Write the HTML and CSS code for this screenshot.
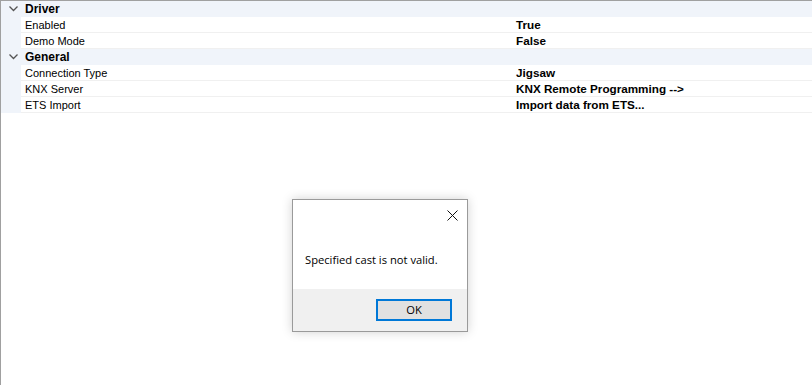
FILE: index.html
```html
<!DOCTYPE html>
<html lang="en">
<head>
    <meta charset="UTF-8">
    <title>Property Grid</title>
    <link rel="stylesheet" href="styles.css">
</head>
<body>

<div class="grid">
    <div class="category">
        <span class="chevron"><svg width="9" height="6" viewBox="0 0 9 6"><path d="M0.5 0.5 L4.5 4.5 L8.5 0.5" fill="none" stroke="#555" stroke-width="1.3"/></svg></span>
        <span class="cat-name">Driver</span>
    </div>
    <div class="row"><span class="margin"></span><span class="name">Enabled</span><span class="value">True</span></div>
    <div class="row"><span class="margin"></span><span class="name">Demo Mode</span><span class="value">False</span></div>
    <div class="category">
        <span class="chevron"><svg width="9" height="6" viewBox="0 0 9 6"><path d="M0.5 0.5 L4.5 4.5 L8.5 0.5" fill="none" stroke="#555" stroke-width="1.3"/></svg></span>
        <span class="cat-name">General</span>
    </div>
    <div class="row"><span class="margin"></span><span class="name">Connection Type</span><span class="value">Jigsaw</span></div>
    <div class="row"><span class="margin"></span><span class="name">KNX Server</span><span class="value">KNX Remote Programming --&gt;</span></div>
    <div class="row"><span class="margin"></span><span class="name">ETS Import</span><span class="value">Import data from ETS...</span></div>
</div>

<div class="dialog">
    <div class="dialog-body">
        <div class="title-bar">
            <span class="close"><svg width="11" height="11" viewBox="0 0 11 11"><path d="M0.5 0.5 L10.5 10.5 M10.5 0.5 L0.5 10.5" stroke="#111" stroke-width="1"/></svg></span>
        </div>
        <p class="message">Specified cast is not valid.</p>
    </div>
    <div class="dialog-footer">
        <button class="ok">OK</button>
    </div>
</div>

</body>
</html>
```

FILE: styles.css
```css
body {
    margin: 0;
    padding: 0;
    width: 812px;
    height: 385px;
    background-color: #fff;
    font-family: 'Liberation Sans', Arial, sans-serif;
    font-size: 11px;
    color: #000;
    overflow: hidden;
    position: relative;
    box-sizing: border-box;
    border-top: 1px solid #a0a0a0;
    border-left: 1px solid #a0a0a0;
}

.grid {
    display: flex;
    flex-direction: column;
}

.category {
    display: flex;
    align-items: center;
    height: 16px;
    background-color: #f0f4fa;
}

.chevron {
    width: 24px;
    display: flex;
    justify-content: center;
}

.cat-name {
    font-weight: bold;
    font-size: 12px;
}

.row {
    display: flex;
    align-items: center;
    height: 16px;
    box-sizing: border-box;
    border-bottom: 1px solid #f0f0f0;
}

.row .margin {
    width: 20px;
    height: 16px;
    background-color: #f0f4fa;
    flex-shrink: 0;
}

.row .name {
    width: 491px;
    padding-left: 4px;
}

.row .value {
    font-weight: bold;
    font-size: 11.7px;
}

.dialog {
    position: absolute;
    left: 291px;
    top: 198px;
    width: 174px;
    height: 131px;
    border: 1px solid #9a9a9a;
    background: #fff;
    box-shadow: 0 0 10px rgba(0, 0, 0, 0.18);
    display: flex;
    flex-direction: column;
    font-family: 'Open Sans', 'Noto Sans', sans-serif;
    font-size: 11.2px;
}

.dialog-body {
    flex: 1;
}

.title-bar {
    display: flex;
    justify-content: flex-end;
    padding: 9px 9px 0 0;
}

.message {
    margin: 28px 0 0 12px;
    color: #000;
}

.dialog-footer {
    height: 42px;
    background-color: #f0f0f0;
    display: flex;
    align-items: center;
    justify-content: flex-end;
    padding-right: 15px;
}

.ok {
    width: 76px;
    height: 22px;
    border: 2px solid #0078d7;
    background-color: #e1e1e1;
    font-family: 'Open Sans', 'Noto Sans', sans-serif;
    font-size: 11.2px;
    padding: 0;
    margin-top: -1px;
}
```
